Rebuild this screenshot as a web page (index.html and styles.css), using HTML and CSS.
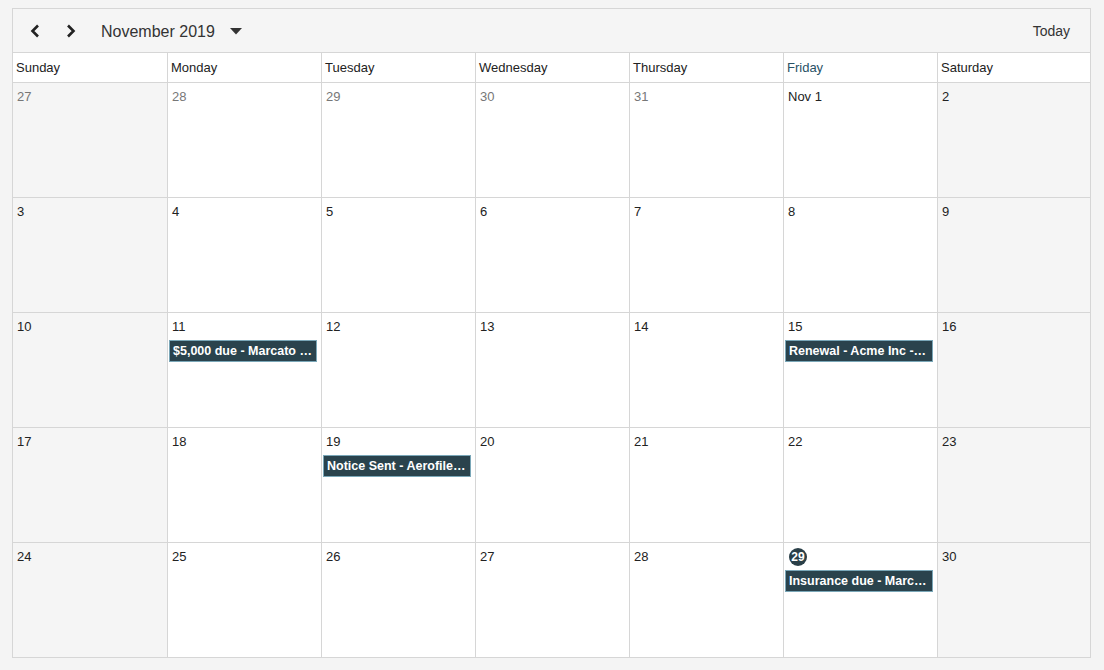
FILE: index.html
```html
<!DOCTYPE html>
<html lang="en">
<head>
  <meta charset="UTF-8">
  <title>Calendar</title>
  <link rel="stylesheet" href="styles.css">
</head>
<body>
  <div class="calendar">
    <div class="toolbar">
      <button class="nav">
        <svg width="12" height="14" viewBox="0 0 12 14"><path d="M9 1.5 L3.5 7 L9 12.5" fill="none" stroke="#222" stroke-width="2.6"/></svg>
      </button>
      <button class="nav">
        <svg width="12" height="14" viewBox="0 0 12 14"><path d="M3 1.5 L8.5 7 L3 12.5" fill="none" stroke="#222" stroke-width="2.6"/></svg>
      </button>
      <span class="title">November 2019</span>
      <svg class="caret" width="12" height="7" viewBox="0 0 12 7"><path d="M0 0 H12 L6 6.5 Z" fill="#333"/></svg>
      <span class="today">Today</span>
    </div>

    <div class="grid">
      <div class="dayname">Sunday</div>
      <div class="dayname">Monday</div>
      <div class="dayname">Tuesday</div>
      <div class="dayname">Wednesday</div>
      <div class="dayname">Thursday</div>
      <div class="dayname current">Friday</div>
      <div class="dayname">Saturday</div>

      <div class="cell weekend other"><span class="num">27</span></div>
      <div class="cell other"><span class="num">28</span></div>
      <div class="cell other"><span class="num">29</span></div>
      <div class="cell other"><span class="num">30</span></div>
      <div class="cell other"><span class="num">31</span></div>
      <div class="cell"><span class="num">Nov 1</span></div>
      <div class="cell weekend"><span class="num">2</span></div>

      <div class="cell weekend"><span class="num">3</span></div>
      <div class="cell"><span class="num">4</span></div>
      <div class="cell"><span class="num">5</span></div>
      <div class="cell"><span class="num">6</span></div>
      <div class="cell"><span class="num">7</span></div>
      <div class="cell"><span class="num">8</span></div>
      <div class="cell weekend"><span class="num">9</span></div>

      <div class="cell weekend"><span class="num">10</span></div>
      <div class="cell"><span class="num">11</span><div class="event">$5,000 due - Marcato Inc</div></div>
      <div class="cell"><span class="num">12</span></div>
      <div class="cell"><span class="num">13</span></div>
      <div class="cell"><span class="num">14</span></div>
      <div class="cell"><span class="num">15</span><div class="event">Renewal - Acme Inc - Lease</div></div>
      <div class="cell weekend"><span class="num">16</span></div>

      <div class="cell weekend"><span class="num">17</span></div>
      <div class="cell"><span class="num">18</span></div>
      <div class="cell"><span class="num">19</span><div class="event">Notice Sent - Aerofile Ltd</div></div>
      <div class="cell"><span class="num">20</span></div>
      <div class="cell"><span class="num">21</span></div>
      <div class="cell"><span class="num">22</span></div>
      <div class="cell weekend"><span class="num">23</span></div>

      <div class="cell weekend"><span class="num">24</span></div>
      <div class="cell"><span class="num">25</span></div>
      <div class="cell"><span class="num">26</span></div>
      <div class="cell"><span class="num">27</span></div>
      <div class="cell"><span class="num">28</span></div>
      <div class="cell"><span class="num badge">29</span><div class="event">Insurance due - Marcato Inc</div></div>
      <div class="cell weekend"><span class="num">30</span></div>
    </div>
  </div>
</body>
</html>
```

FILE: styles.css
```css
body {
  margin: 0;
  background: #f4f4f4;
  font-family: 'Liberation Sans', Arial, sans-serif;
  color: #222;
}

.calendar {
  margin: 8px 0 0 12px;
  width: 1079px;
  box-sizing: border-box;
  border: 1px solid #d6d6d6;
  background: #fff;
}

.toolbar {
  height: 43px;
  background: #f5f5f5;
  border-bottom: 1px solid #d6d6d6;
  display: flex;
  align-items: center;
  padding: 0 20px 0 4px;
}

.nav {
  border: none;
  background: none;
  padding: 0;
  width: 36px;
  height: 30px;
  display: flex;
  align-items: center;
  justify-content: center;
  cursor: pointer;
}

.title {
  font-size: 16px;
  color: #333;
  margin-left: 12px;
  margin-top: 2px;
}

.caret {
  margin-left: 15px;
  margin-top: 1px;
}

.today {
  margin-left: auto;
  font-size: 14px;
  color: #333;
}

.grid {
  display: grid;
  grid-template-columns: 155px repeat(5, 154px) 152px;
  grid-template-rows: 30px repeat(4, 115px) 114px;
}

.dayname {
  font-size: 13px;
  color: #222;
  padding: 7px 0 0 3px;
  border-right: 1px solid #d6d6d6;
  border-bottom: 1px solid #d6d6d6;
  box-sizing: border-box;
}

.dayname.current {
  color: #2a5266;
}

.cell {
  border-right: 1px solid #d6d6d6;
  border-bottom: 1px solid #d6d6d6;
  box-sizing: border-box;
  padding: 5px 1px 0 1px;
  font-size: 13px;
  min-width: 0;
}

.dayname:nth-child(7n),
.cell:nth-child(7n) {
  border-right: none;
}

.cell:nth-last-child(-n+7) {
  border-bottom: none;
}

.cell.weekend {
  background: #f5f5f5;
}

.num {
  display: inline-block;
  margin-left: 3px;
  height: 18px;
  line-height: 18px;
}

.cell.other .num {
  color: #777;
}

.num.badge {
  background: #2a3f48;
  color: #fff;
  border-radius: 50%;
  width: 18px;
  text-align: center;
  margin-left: 4px;
  font-size: 12px;
  font-weight: bold;
}

.event {
  margin-top: 4px;
  background: #2a434d;
  border: 1px solid #7aa7b8;
  color: #fff;
  font-size: 12.5px;
  font-weight: bold;
  height: 22px;
  line-height: 21px;
  padding: 0 3px;
  white-space: nowrap;
  overflow: hidden;
  text-overflow: ellipsis;
  box-sizing: border-box;
  margin-right: 3px;
}
```
